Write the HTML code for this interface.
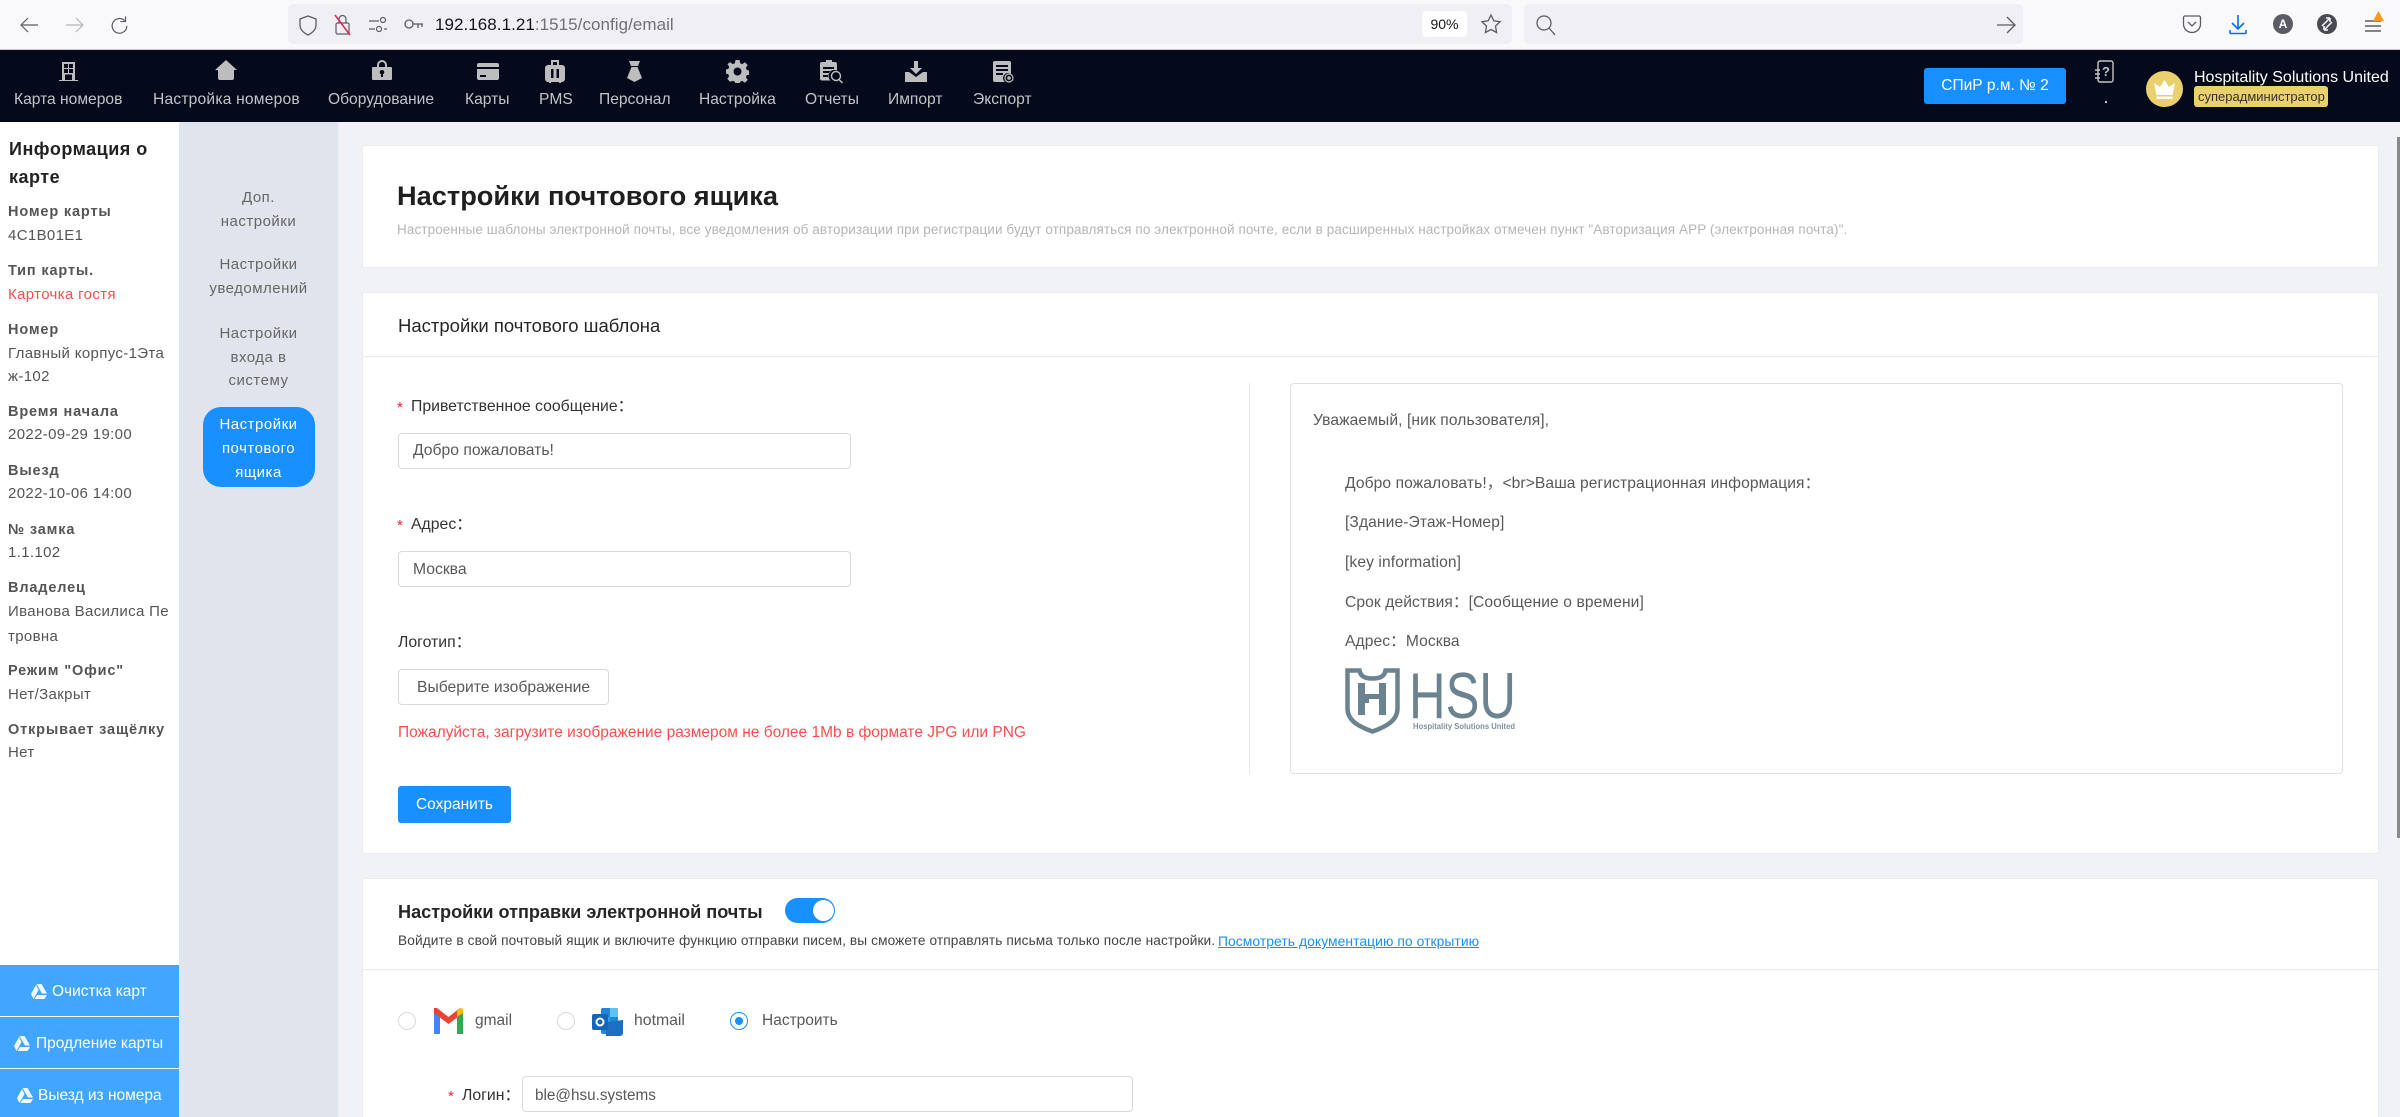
<!DOCTYPE html>
<html lang="ru">
<head>
<meta charset="utf-8">
<title>Настройки почтового ящика</title>
<style>
html,body{margin:0;padding:0;width:2400px;height:1117px;overflow:hidden;background:#f0f2f5}
body{position:relative;font-family:"Liberation Sans","Noto Sans CJK SC",sans-serif;color:#333}
div,span,a,svg{position:absolute;display:block}
.t{white-space:nowrap;line-height:20px;height:20px}
.n{color:#c4c4c4;font-size:15.6px;top:90px}
.i{fill:#bdbdbd}
.sb{font-size:14.5px;font-weight:bold;color:#555;left:8px;letter-spacing:.85px}
.sv{font-size:15px;color:#555;left:8px;letter-spacing:.35px}
.sm{font-size:15px;color:#666;left:179px;width:159px;text-align:center;letter-spacing:.5px}
.smw{color:#fff}
.bb{left:0;width:179px;background:#40a6ff}
.bt{color:#fff;font-size:15.5px}
.card{background:#fff;left:362px;width:2017px;border:1px solid #ebebeb;box-sizing:border-box;border-radius:2px}
.hl{height:1px;background:#e8e8e8}
.inp{background:#fff;border:1px solid #d9d9d9;border-radius:4px;box-sizing:border-box}
.lb{font-size:15.8px;color:#333}
.st{font-size:15px;color:#f5222d}
.v{font-size:15.7px;color:#595959}
.pv{font-size:15.6px;color:#595959;letter-spacing:.1px}
.rd{width:18px;height:18px;border:1px solid #d9d9d9;border-radius:50%;box-sizing:border-box;background:#fff}
</style>
</head>
<body>
<!-- Browser toolbar -->
<div style="left:0;top:0;width:2400px;height:49px;background:#f9f9fb"></div>
<div style="left:0;top:49px;width:2400px;height:1px;background:#ccc"></div>
<div style="left:288px;top:4px;width:1224px;height:40px;background:#f0f0f4;border-radius:5px"></div>
<div style="left:1524px;top:4px;width:499px;height:40px;background:#f0f0f4;border-radius:5px"></div>
<svg style="left:18px;top:14px" width="22" height="22" viewBox="0 0 22 22" fill="none" stroke="#5b5b66" stroke-width="1.2"><path d="M20 11H3M10 4l-7 7 7 7"/></svg>
<svg style="left:64px;top:14px" width="22" height="22" viewBox="0 0 22 22" fill="none" stroke="#b4b4ba" stroke-width="1.2"><path d="M2 11h17M12 4l7 7-7 7"/></svg>
<svg style="left:110px;top:15px" width="19" height="20" viewBox="0 0 22 22" fill="none" stroke="#5b5b66" stroke-width="1.4"><path d="M17 6a8.500 8.500 0 1 0 2.500 6M18 1v6h-6"/></svg>
<svg style="left:298px;top:14px" width="20" height="22" viewBox="0 0 20 22" fill="none" stroke="#5b5b66" stroke-width="1.300"><path d="M10 2l8 3v6c0 5-4 8-8 10-4-2-8-5-8-10V5z"/></svg>
<svg style="left:333px;top:13px" width="20" height="23" viewBox="0 0 20 23" fill="none" stroke="#5b5b66" stroke-width="1.200"><rect x="3" y="10" width="13" height="11" rx="1.500"/><path d="M6 10V6a3.500 3.500 0 0 1 7 0v4"/><path d="M2 2l15 20" stroke="#e22850" stroke-width="1.600"/></svg>
<svg style="left:368px;top:15px" width="20" height="20" viewBox="0 0 20 20" fill="none" stroke="#5b5b66" stroke-width="1.200"><path d="M1 6h10M1 14h6M16 14h3"/><circle cx="15" cy="5" r="2.500"/><circle cx="11" cy="14" r="2.500"/></svg>
<svg style="left:403px;top:16px" width="21" height="18" viewBox="0 0 21 18" fill="none" stroke="#5b5b66" stroke-width="1.300"><circle cx="6" cy="8" r="4"/><path d="M10 8h10M15 8v4M19 8v3"/></svg>
<div class="t" style="left:435px;top:15px;font-size:17px;letter-spacing:.05px;color:#15141a">192.168.1.21<span style="position:static;display:inline;color:#6f6f78">:1515/config/email</span></div>
<div style="left:1422px;top:11px;width:45px;height:26px;background:#fff;border-radius:4px"></div>
<div class="t" style="left:1422px;top:14px;width:45px;text-align:center;font-size:14px;color:#15141a">90%</div>
<svg style="left:1480px;top:13px" width="22" height="22" viewBox="0 0 22 22" fill="none" stroke="#5b5b66" stroke-width="1.300"><path d="M11 2l2.800 5.800 6.200.9-4.500 4.400 1.100 6.400-5.600-3-5.600 3 1.100-6.400L2 8.700l6.200-.9z"/></svg>
<svg style="left:1535px;top:14px" width="22" height="22" viewBox="0 0 22 22" fill="none" stroke="#5b5b66" stroke-width="1.300"><circle cx="9" cy="9" r="7"/><path d="M14 14l6 7"/></svg>
<svg style="left:1995px;top:14px" width="22" height="22" viewBox="0 0 22 22" fill="none" stroke="#5b5b66" stroke-width="1.300"><path d="M2 11h17M12 3l8 8-8 8"/></svg>
<svg style="left:2182px;top:14px" width="20" height="20" viewBox="0 0 20 20" fill="none" stroke="#5b5b66" stroke-width="1.300"><path d="M3 2h14a1.500 1.500 0 0 1 1.500 1.500V10a8.500 8.500 0 0 1-17 0V3.500A1.500 1.500 0 0 1 3 2z"/><path d="M6 8l4 4 4-4"/></svg>
<svg style="left:2228px;top:13px" width="20" height="22" viewBox="0 0 20 22" fill="none" stroke="#0a6ee6" stroke-width="1.600"><path d="M10 2v14M4 10l6 6 6-6M2 17v2.500a1 1 0 0 0 1 1h14a1 1 0 0 0 1-1V17"/></svg>
<div style="left:2273px;top:14px;width:20px;height:20px;border-radius:50%;background:#5b5b66"></div>
<div class="t" style="left:2273px;top:14px;width:20px;text-align:center;font-size:12px;font-weight:bold;color:#fff">A</div>
<svg style="left:2317px;top:14px" width="20" height="20" viewBox="0 0 20 20"><circle cx="10" cy="10" r="10" fill="#4a4a52"/><path d="M5 12L13 4M13 4v4M13 4H9M7 16l8-8M7 16h4M7 16v-4" stroke="#f9f9fb" stroke-width="1.500" fill="none"/></svg>
<svg style="left:2365px;top:20px" width="16" height="12" viewBox="0 0 16 12" stroke="#5b5b66" stroke-width="1.500"><path d="M0 1h16M0 6h16M0 11h16"/></svg>
<svg style="left:2373px;top:11px" width="11" height="10" viewBox="0 0 11 10"><path d="M5.500 0L11 10H0z" fill="#f49a1f"/></svg>

<!-- Top navigation -->
<div style="left:0;top:50px;width:2400px;height:72px;background:#040a1c"></div>
<svg class="i" style="left:59px;top:62px" width="19" height="19" viewBox="0 0 19 19"><path fill-rule="evenodd" d="M3 0h13v18h3v1H0v-1h3zM5 2v4h4V2zm5 0v4h4V2zM5 7v4h4V7zm5 0v4h4V7zM6 12.500V18h7v-5.500z"/></svg>
<svg class="i" style="left:215px;top:60px" width="22" height="20" viewBox="0 0 22 20"><path d="M11 0l11 10h-3v8a2 2 0 0 1-2 2H5a2 2 0 0 1-2-2v-8H0z"/></svg>
<svg class="i" style="left:372px;top:60px" width="20" height="20" viewBox="0 0 20 20"><path fill-rule="evenodd" d="M5 7V5a5 5 0 0 1 10 0v2h4a1 1 0 0 1 1 1v11a1 1 0 0 1-1 1H1a1 1 0 0 1-1-1V8a1 1 0 0 1 1-1zm2 0h6V5a3 3 0 0 0-6 0zm3 3a2.200 2.200 0 0 0-1 4.200V17h2v-2.800A2.200 2.200 0 0 0 10 10z"/></svg>
<svg class="i" style="left:477px;top:63px" width="22" height="17" viewBox="0 0 22 17"><path fill-rule="evenodd" d="M2 0h18a2 2 0 0 1 2 2v2H0V2a2 2 0 0 1 2-2zM0 6h22v9a2 2 0 0 1-2 2H2a2 2 0 0 1-2-2zm3 6v2h6v-2z"/></svg>
<svg class="i" style="left:545px;top:60px" width="20" height="23" viewBox="0 0 20 23"><path fill-rule="evenodd" d="M6 0h8v5h3a3 3 0 0 1 3 3v11a3 3 0 0 1-3 3h-1v1h-2v-1H6v1H4v-1H3a3 3 0 0 1-3-3V8a3 3 0 0 1 3-3h3zm2 2v3h4V2zM6 9v9h2.500V9zm5.500 0v9H14V9z"/></svg>
<svg class="i" style="left:627px;top:61px" width="15" height="21" viewBox="0 0 15 21"><path d="M2 0h11l-2 5H4zM4.500 6h6L15 17l-7.500 4L0 17z"/></svg>
<svg class="i" style="left:726px;top:60px" width="23" height="23" viewBox="0 0 23 23"><path fill-rule="evenodd" d="M9.500 0h4l.6 3.200 2.100.9L19 2.300l2.700 2.800-1.800 2.700.9 2.200 3.200.5v4l-3.200.6-.9 2.100 1.800 2.700-2.700 2.800-2.800-1.800-2.100.9-.6 3.200h-4l-.6-3.200-2.100-.9L4 21.700l-2.700-2.800 1.800-2.700-.9-2.100L-.9 13.500v-4l3.200-.5.900-2.200-1.800-2.700L4 2.300l2.800 1.800 2.100-.9zM11.500 7.500a4 4 0 1 0 0 8 4 4 0 0 0 0-8z"/></svg>
<svg class="i" style="left:820px;top:60px" width="24" height="24" viewBox="0 0 24 24"><path fill-rule="evenodd" d="M6 0h6v2h3a2 2 0 0 1 2 2v6.500a6 6 0 0 0-6.500 10H2a2 2 0 0 1-2-2V4a2 2 0 0 1 2-2h4zM3 7v2h11V7zm0 4v2h7v-2zm0 4v2h6v-2z"/><circle cx="16" cy="16" r="4.500" fill="none" stroke="#bdbdbd" stroke-width="1.400"/><path d="M19 19.500l3.500 3.500" stroke="#bdbdbd" stroke-width="1.500"/></svg>
<svg class="i" style="left:905px;top:61px" width="22" height="21" viewBox="0 0 22 21"><path d="M9 0h4v7h4l-6 6-6-6h4zM0 11h4l7 5 7-5h4v10H0z"/></svg>
<svg class="i" style="left:993px;top:61px" width="21" height="22" viewBox="0 0 21 22"><path fill-rule="evenodd" d="M2 0h14a2 2 0 0 1 2 2v11a5 5 0 0 0-6 8H2a2 2 0 0 1-2-2V2a2 2 0 0 1 2-2zm1 4v2h12V4zm0 4v2h12V8zm0 4v2h7v-2z"/><circle cx="16" cy="17" r="4" fill="none" stroke="#bdbdbd" stroke-width="1.200"/><circle cx="16" cy="17" r="1.800"/></svg>
<div class="t n" style="left:14px">Карта номеров</div>
<div class="t n" style="left:153px;letter-spacing:.2px">Настройка номеров</div>
<div class="t n" style="left:328px">Оборудование</div>
<div class="t n" style="left:465px">Карты</div>
<div class="t n" style="left:539px">PMS</div>
<div class="t n" style="left:599px">Персонал</div>
<div class="t n" style="left:699px">Настройка</div>
<div class="t n" style="left:805px">Отчеты</div>
<div class="t n" style="left:888px">Импорт</div>
<div class="t n" style="left:973px">Экспорт</div>
<div style="left:1924px;top:68px;width:142px;height:36px;background:#1890ff;border-radius:3px"></div>
<div class="t" style="left:1924px;top:76px;width:142px;text-align:center;color:#fff;font-size:15.5px">СПиР р.м. № 2</div>
<svg style="left:2095px;top:60px" width="20" height="23" viewBox="0 0 20 23" fill="none" stroke="#c4c4c4" stroke-width="1.400"><rect x="3" y="1" width="15" height="21" rx="2"/><path d="M0 10h5M0 14h5M0 18h5"/></svg>
<div class="t" style="left:2100px;top:62px;width:12px;text-align:center;font-size:13px;font-weight:bold;color:#c4c4c4">?</div>
<div style="left:2105px;top:101px;width:2px;height:2px;background:#c4c4c4"></div>
<div style="left:2146px;top:71px;width:37px;height:36px;border-radius:50%;background:#ebd06e"></div>
<svg style="left:2152px;top:78px" width="25" height="22" viewBox="0 0 25 22" fill="#fff"><path d="M12.500 2l4.500 7 6-4-2.500 12h-16L2 5l6 4zM4.500 18.500h16V21h-16z"/></svg>
<div class="t" style="left:2194px;top:68px;color:#fff;font-size:16px">Hospitality Solutions United</div>
<div style="left:2194px;top:86px;width:134px;height:21px;background:#ebd06e;border-radius:3px"></div>
<div class="t" style="left:2198px;top:87px;font-size:13px;color:#333">суперадминистратор</div>

<!-- Left sidebar -->
<div style="left:0;top:122px;width:179px;height:995px;background:#fff"></div>
<div class="t" style="left:9px;top:139px;font-size:18px;font-weight:bold;color:#222;letter-spacing:.5px">Информация о</div>
<div class="t" style="left:9px;top:167px;font-size:18px;font-weight:bold;color:#222;letter-spacing:.5px">карте</div>
<div class="t sb" style="top:202px">Номер карты</div>
<div class="t sv" style="top:226px">4C1B01E1</div>
<div class="t sb" style="top:261px">Тип карты.</div>
<div class="t sv" style="top:285px;color:#ff4d4f">Карточка гостя</div>
<div class="t sb" style="top:320px">Номер</div>
<div class="t sv" style="top:344px">Главный корпус-1Эта</div>
<div class="t sv" style="top:367px">ж-102</div>
<div class="t sb" style="top:402px">Время начала</div>
<div class="t sv" style="top:425px">2022-09-29 19:00</div>
<div class="t sb" style="top:461px">Выезд</div>
<div class="t sv" style="top:484px">2022-10-06 14:00</div>
<div class="t sb" style="top:520px">№ замка</div>
<div class="t sv" style="top:543px">1.1.102</div>
<div class="t sb" style="top:578px">Владелец</div>
<div class="t sv" style="top:602px">Иванова Василиса Пе</div>
<div class="t sv" style="top:627px">тровна</div>
<div class="t sb" style="top:661px">Режим "Офис"</div>
<div class="t sv" style="top:685px">Нет/Закрыт</div>
<div class="t sb" style="top:720px">Открывает защёлку</div>
<div class="t sv" style="top:743px">Нет</div>

<div class="bb" style="top:965px;height:51px"></div>
<div class="bb" style="top:1017px;height:51px"></div>
<div class="bb" style="top:1069px;height:48px"></div>
<svg style="left:31px;top:984px" width="16" height="15" viewBox="0 0 16 15" fill="#fff"><path d="M5.500 0h5l5.500 9.500h-5zM5 1L0 10l2.500 5L7.500 6zM3.500 15h10l2.500-4H6z" opacity=".92"/></svg>
<div class="t bt" style="left:52px;top:982px">Очистка карт</div>
<svg style="left:14px;top:1036px" width="16" height="15" viewBox="0 0 16 15" fill="#fff"><path d="M5.500 0h5l5.500 9.500h-5zM5 1L0 10l2.500 5L7.500 6zM3.500 15h10l2.500-4H6z" opacity=".92"/></svg>
<div class="t bt" style="left:36px;top:1034px">Продление карты</div>
<svg style="left:17px;top:1088px" width="16" height="15" viewBox="0 0 16 15" fill="#fff"><path d="M5.500 0h5l5.500 9.500h-5zM5 1L0 10l2.500 5L7.500 6zM3.500 15h10l2.500-4H6z" opacity=".92"/></svg>
<div class="t bt" style="left:38px;top:1086px">Выезд из номера</div>

<!-- Sub menu -->
<div style="left:179px;top:122px;width:159px;height:995px;background:#e0e4ec"></div>
<div class="t sm" style="top:188px">Доп.</div>
<div class="t sm" style="top:212px">настройки</div>
<div class="t sm" style="top:255px">Настройки</div>
<div class="t sm" style="top:279px">уведомлений</div>
<div class="t sm" style="top:324px">Настройки</div>
<div class="t sm" style="top:348px">входа в</div>
<div class="t sm" style="top:371px">систему</div>
<div style="left:203px;top:407px;width:112px;height:80px;background:#1890ff;border-radius:18px"></div>
<div class="t sm smw" style="top:415px">Настройки</div>
<div class="t sm smw" style="top:439px">почтового</div>
<div class="t sm smw" style="top:463px">ящика</div>

<!-- Card 1 -->
<div class="card" style="top:145px;height:123px"></div>
<div class="t" style="left:397px;top:186px;font-size:27.200px;font-weight:bold;color:#1f1f1f">Настройки почтового ящика</div>
<div class="t" style="left:397px;top:220px;font-size:13.500px;color:#b5b5b5;letter-spacing:.1px">Настроенные шаблоны электронной почты, все уведомления об авторизации при регистрации будут отправляться по электронной почте, если в расширенных настройках отмечен пункт "Авторизация APP (электронная почта)".</div>

<!-- Card 2 -->
<div class="card" style="top:292px;height:562px"></div>
<div class="hl" style="left:363px;top:356px;width:2015px"></div>
<div class="t" style="left:398px;top:316px;font-size:18.500px;color:#262626">Настройки почтового шаблона</div>
<div class="t st" style="left:397px;top:398px">*</div>
<div class="t lb" style="left:411px;top:397px">Приветственное сообщение：</div>
<div class="inp" style="left:398px;top:433px;width:453px;height:36px"></div>
<div class="t v" style="left:413px;top:441px">Добро пожаловать!</div>
<div class="t st" style="left:397px;top:516px">*</div>
<div class="t lb" style="left:411px;top:515px">Адрес：</div>
<div class="inp" style="left:398px;top:551px;width:453px;height:36px"></div>
<div class="t v" style="left:413px;top:560px">Москва</div>
<div class="t lb" style="left:398px;top:633px">Логотип：</div>
<div class="inp" style="left:398px;top:669px;width:211px;height:36px"></div>
<div class="t v" style="left:417px;top:678px">Выберите изображение</div>
<div class="t" style="left:398px;top:723px;font-size:15.500px;color:#ff4d4f">Пожалуйста, загрузите изображение размером не более 1Mb в формате JPG или PNG</div>
<div style="left:398px;top:786px;width:113px;height:37px;background:#1890ff;border-radius:3px"></div>
<div class="t" style="left:398px;top:795px;width:113px;text-align:center;color:#fff;font-size:15.500px">Сохранить</div>
<div style="left:1249px;top:383px;width:1px;height:391px;background:#e8e8e8"></div>
<div class="inp" style="left:1290px;top:383px;width:1053px;height:391px;border-color:#e0e0e0"></div>
<div class="t pv" style="left:1313px;top:411px">Уважаемый, [ник пользователя],</div>
<div class="t pv" style="left:1345px;top:474px">Добро пожаловать!，&lt;br&gt;Ваша регистрационная информация：</div>
<div class="t pv" style="left:1345px;top:513px">[Здание-Этаж-Номер]</div>
<div class="t pv" style="left:1345px;top:553px">[key information]</div>
<div class="t pv" style="left:1345px;top:593px">Срок действия：[Сообщение о времени]</div>
<div class="t pv" style="left:1345px;top:632px">Адрес：Москва</div>
<svg style="left:1345px;top:668px" width="172" height="66" viewBox="0 0 172 66">
<path d="M2.500 2.500h12c1 5 4 8 13 8s12-3 13-8h12v38c0 12-11 18-25 23C13.500 58.500 2.500 52.500 2.500 40.500z" fill="none" stroke="#6b8290" stroke-width="4.500"/>
<path d="M13 15h7v32h-7zM34 15h7v32h-7zM20 26h14v5H24v4h-4z" fill="#6b8290"/>
<text x="64" y="50" font-family="Liberation Sans,sans-serif" font-size="65" fill="#6b8290" textLength="107" lengthAdjust="spacingAndGlyphs">HSU</text>
<text x="68" y="61" font-family="Liberation Sans,sans-serif" font-size="8" font-weight="bold" fill="#7d909c" textLength="102" lengthAdjust="spacingAndGlyphs">Hospitality Solutions United</text>
</svg>

<!-- Card 3 -->
<div class="card" style="top:878px;height:260px"></div>
<div class="hl" style="left:363px;top:969px;width:2015px"></div>
<div class="t" style="left:398px;top:902px;font-size:18.100px;font-weight:bold;color:#262626">Настройки отправки электронной почты</div>
<div style="left:785px;top:898px;width:50px;height:25px;background:#1890ff;border-radius:13px"></div>
<div style="left:813px;top:900px;width:21px;height:21px;background:#fff;border-radius:50%"></div>
<div class="t" style="left:398px;top:931px;font-size:13.700px;color:#444;letter-spacing:.1px">Войдите в свой почтовый ящик и включите функцию отправки писем, вы сможете отправлять письма только после настройки.</div>
<a class="t" style="left:1218px;top:931px;font-size:13.900px;color:#1890ff;text-decoration:underline;letter-spacing:.05px">Посмотреть документацию по открытию</a>
<div class="rd" style="left:398px;top:1012px"></div>
<svg style="left:434px;top:1008px" width="29" height="26" viewBox="0 0 29 26"><path d="M0 4v22h6V9z" fill="#4285f4"/><path d="M23 9v17h6V4z" fill="#34a853"/><path d="M0 0v5l14.500 11L29 5V1l-3-1-11.500 9L3 0z" fill="#ea4335"/><path d="M23 3l3-3 3 1v4l-6 4z" fill="#fbbc04"/></svg>
<div class="t v" style="left:475px;top:1011px;font-size:15.500px">gmail</div>
<div class="rd" style="left:557px;top:1012px"></div>
<svg style="left:592px;top:1008px" width="31" height="28" viewBox="0 0 31 28"><rect x="9" y="0" width="17" height="26" rx="2" fill="#1e88d8"/><path d="M18 0h8v9h-8z" fill="#5ac4f2"/><path d="M9 9h9v9H9z" fill="#2ea4e6"/><path d="M14 14l17-2v13a3 3 0 0 1-3 3H14z" fill="#1c6fc2"/><rect x="0" y="6" width="16" height="16" rx="2" fill="#1565b8"/><circle cx="8" cy="14" r="3.500" fill="none" stroke="#fff" stroke-width="2"/></svg>
<div class="t v" style="left:634px;top:1011px;font-size:15.800px">hotmail</div>
<div class="rd" style="left:730px;top:1012px;border-color:#1890ff"></div>
<div style="left:735px;top:1017px;width:8px;height:8px;border-radius:50%;background:#1890ff"></div>
<div class="t v" style="left:762px;top:1011px;font-size:15.500px">Настроить</div>
<div class="t st" style="left:448px;top:1087px">*</div>
<div class="t lb" style="left:462px;top:1086px">Логин：</div>
<div class="inp" style="left:522px;top:1076px;width:611px;height:36px"></div>
<div class="t v" style="left:535px;top:1086px;font-size:15.300px">ble@hsu.systems</div>

<!-- Scrollbar -->
<div style="left:2397px;top:137px;width:3px;height:701px;background:#8a8a8a"></div>
</body>
</html>
